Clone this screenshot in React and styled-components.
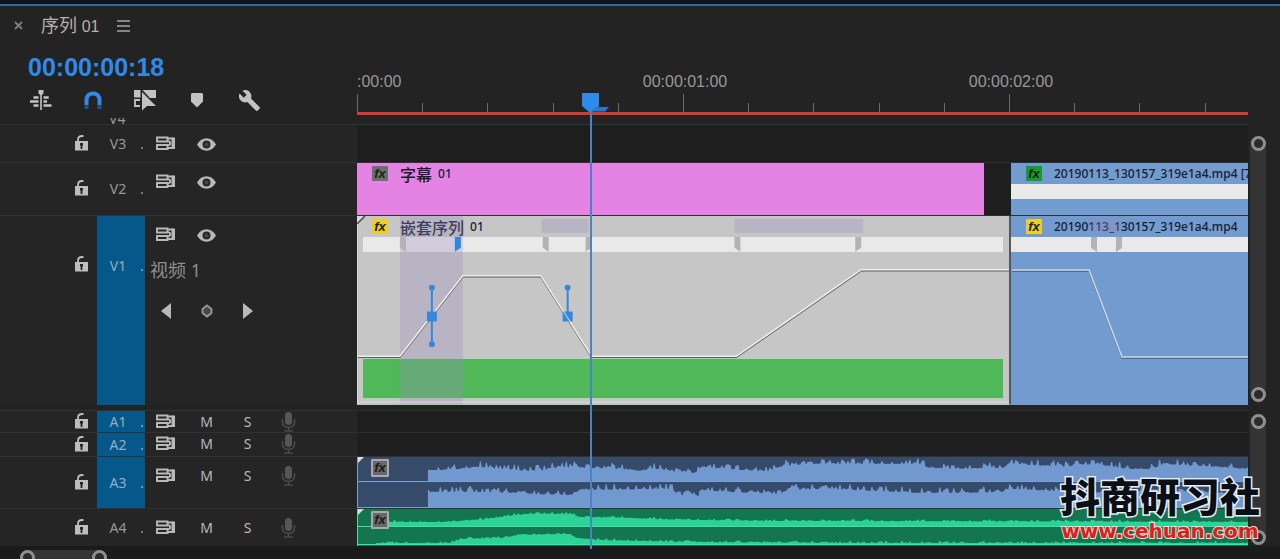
import React, { Fragment, useState } from 'react'
import styled, { createGlobalStyle } from 'styled-components'
import { MdBuild } from 'react-icons/md'

const GlobalStyle = createGlobalStyle`
  * {
    box-sizing: border-box;
  }
  body {
    margin: 0;
    background: #232323;
    color: #b4b4b4;
    font-family: "Noto Sans", "Noto Sans CJK SC", sans-serif;
    font-size: 14px;
  }
  button {
    display: flex;
    align-items: center;
    justify-content: center;
    padding: 0;
    background: none;
    border: 0;
    color: inherit;
    font: inherit;
    cursor: pointer;
  }
`

const Panel = styled.div`
  position: relative;
  min-height: 100vh;
  overflow: hidden;

  border-top: 4px solid #0c131c;
`

const TabBar = styled.header`
  display: flex;
  align-items: center;
  gap: 18px;
  height: 41px;
  padding-left: 14px;

  border-top: 2px solid #38659a;
`

const TabTitle = styled.h1`
  margin: 0;
  color: #b8b0ae;
  font-size: 18px;
  font-weight: 400;
  line-height: 24px;

  span {
    font-family: "Liberation Sans", sans-serif;
    font-size: 16px;
  }
`

const Timeline = styled.main`
  position: relative;
`

/* left tools / track names, lane, scroll gutter */
const Top = styled.div`
  display: grid;
  grid-template-columns: 357px 1fr 32px;
  height: 73px;
`

const Timecode = styled.div`
  padding: 7px 0 0 28px;

  color: #2f8ae8; /* blue */
  font-family: "Liberation Sans", sans-serif;
  font-size: 25px;
  font-weight: 600;
  line-height: 30px;
`

const Tools = styled.div`
  display: grid;
  grid-template-columns: repeat(5, 52px);
  height: 36px;
  padding-left: 15px;

  color: #c2c2c2;
`

const Ruler = styled.div`
  padding-top: 27px;
  overflow: hidden;
`

const RulerLabels = styled.div`
  display: grid;
  grid-template-columns: 165fr 326fr 326fr 74fr;

  color: #989898;
  font-family: "Liberation Sans", sans-serif;
  font-size: 16px;
  line-height: 20px;
  text-align: center;

  span:first-child {
    text-align: left;
  }
`

const Ticks = styled.svg`
  display: block;
  width: 100%;
  height: 20px;
`

const RenderBar = styled.div`
  height: 3px;
  background: #d63a34; /* red */
`

const Group = styled.section`
  display: grid;
  grid-template-columns: 1fr 32px;
  ${({ $gap }) => $gap && 'margin-top: 5px;'}
`

/* bottom edge of the track scrolled out of view */
const SliverTrack = styled.div`
  display: flex;
  align-items: flex-end;
  height: 6px;
  padding-left: 109px;
  overflow: hidden;

  color: #989898;
  line-height: 11px;
`

const Track = styled.div`
  display: grid;
  grid-template-columns: 357px 1fr;
  height: ${({ $height }) => $height}px;
`

const TrackHead = styled.div`
  display: grid;
  grid-template-columns: 97px 48px 1fr;

  background: #252525;
  border-top: 1px solid #303030;
`

const LockCell = styled.div`
  display: flex;
  align-items: ${({ $tall }) => $tall ? 'flex-start' : 'center'};
  justify-content: flex-end;
  padding: ${({ $tall }) => $tall ? '40px 9px 0 0' : '0 9px 0 0'};

  color: #bdbdbd;
`

const NameCell = styled.div`
  display: grid;
  grid-template-columns: 1fr 6px;
  align-items: ${({ $tall }) => $tall ? 'start' : 'center'};
  padding-top: ${({ $tall }) => $tall ? 40 : 0}px;

  background: ${({ $on }) => $on ? '#07588a' : 'transparent'};
  color: ${({ $on }) => $on ? '#8fb0c8' : '#989898'};
  line-height: 20px;
  text-align: center;
`

const Controls = styled.div`
  display: grid;
  grid-template-columns: repeat(4, 41px);
  align-content: start;
  align-items: center;
  justify-items: center;
  padding-top: ${({ $compact }) => $compact ? 2 : 10}px;

  color: #b9b9b9;
  line-height: 18px;

  button {
    height: 18px;
  }
`

const TrackName = styled.div`
  grid-column: 1 / -1;
  justify-self: start;
  padding: 14px 0 20px 5px;

  color: #8e8e8e;
  font-size: 18px;
  line-height: 24px;
`

const Lane = styled.div`
  display: grid;
  grid-template-columns: ${({ $cols }) => $cols || '1fr'};
  min-width: 0;

  background: #1e1e1e;
  border-top: 1px solid ${({ $first }) => $first ? '#263c3b' : '#303030'};
`

const clipColors = {
  pink: '#e583e5',
  grey: '#c6c6c6',
  blue: '#729bcf'
}

const Clip = styled.div`
  position: relative;
  min-width: 0;
  overflow: hidden;

  background: ${({ $color }) => clipColors[$color]};
  ${({ $color }) => $color === 'grey' && `
    border-right: 2px solid #56595c;
    border-bottom: 1px solid #9fd3a4;
  `}
`

const ClipTitle = styled.div`
  display: flex;
  align-items: center;
  gap: 12px;
  height: 21px;
  padding-left: 15px;

  color: #15202e;
  font-size: 12px;
  font-weight: 500;
  line-height: 20px;
  white-space: nowrap;
`

const ClipName = styled.span`
  display: flex;
  align-items: center;
  gap: 6px;
`

const Big = styled.span`
  font-family: "Noto Sans CJK SC", sans-serif;
  font-size: 16px;
  line-height: 18px;
`

const badgeColors = {
  dim: '#67706a',
  green: '#169a35',
  yellow: '#f0cd22'
}

const Badge = styled.span`
  flex: none;
  width: 16px;
  height: 15px;

  background: ${({ $color }) => badgeColors[$color]};
  border-radius: 1px;
  color: #16240f;
  font-family: "Liberation Sans", sans-serif;
  font-size: 13px;
  font-style: italic;
  font-weight: 700;
  line-height: 15px;
  text-align: center;
`

const AudioBadge = styled(Badge)`
  position: absolute;
  top: 2px;
  left: 13px;
  width: 18px;
  height: 18px;

  background: #686868;
  border: 2px solid #a9a9a9;
  color: #1b1b1b;
  line-height: 14px;
`

const SpeedBar = styled.div`
  height: 15px;
  margin: 0 ${({ $inset }) => $inset ? 6 : 0}px;
  background: #e9e9e9;
`

const Strip = styled.div`
  height: 39px;
  margin: 107px 6px 0;
  background: #50b858; /* green */
`

const Overlay = styled.svg`
  position: absolute;
  inset: 0;
  width: 100%;
  height: 100%;
`

const AudioClip = styled.div`
  position: relative;
  overflow: hidden;
  border-left: 1px solid ${({ $line }) => $line};
`

const Gutter = styled.div`
  display: flex;
  padding: ${({ $video }) => $video ? '18px 0 3px 2px' : '4px 0 1px 2px'};
`

const ScrollBar = styled.div`
  display: flex;
  flex-direction: ${({ $across }) => $across ? 'row' : 'column'};
  align-items: center;
  justify-content: space-between;
  width: ${({ $across }) => $across ? 87 : 16}px;

  background: #343434;
  border-radius: 8px;
`

const Ring = styled.span`
  width: 15px;
  height: 15px;

  background: #2b2b2b;
  border: 3px solid #8f8f8f;
  border-radius: 50%;
`

const Footer = styled.footer`
  height: 13px;
  padding: 4px 0 0 20px;
  overflow: hidden;

  background: #1b1b1b;
`

/* lies over the lane column only */
const PlayheadLayer = styled.div`
  position: absolute;
  top: 48px;
  right: 32px;
  bottom: 10px;
  left: 357px;

  pointer-events: none;
`

const Playhead = styled.div`
  position: absolute;
  top: 0;
  bottom: 0;
  width: 2px;

  background: #4a83c4;

  svg {
    position: absolute;
    top: 0;
    left: -8px;
  }
`

const Watermark = styled.a`
  position: absolute;
  right: 20px;
  bottom: 17px;

  color: #0b0f18;
  font-family: "Noto Sans CJK SC", sans-serif;
  font-size: 40px;
  font-weight: 900;
  line-height: 50px;
  paint-order: stroke fill;
  text-align: center;
  text-decoration: none;
  -webkit-text-stroke: 3px #e9eef2;

  span {
    display: block;
    color: #d8201c; /* red */
    font-family: "DejaVu Sans", sans-serif;
    font-size: 20px;
    font-weight: 700;
    line-height: 22px;
    -webkit-text-stroke: 2px #f4dcd8;
  }
`

const LockIcon = () => (
  <svg width="13" height="18" viewBox="0 0 13 18">
    <path d="M3 7.500V4.400C3.200 2.200 4.800 1 7 1h1.500" fill="none" stroke="currentColor" strokeWidth="1.800" />
    <path d="M0 6h13v9.500H0z" fill="currentColor" />
    <path d="M5 8h3v2.600H7.400V14H5.600v-3.400H5z" fill="#252525" />
  </svg>
)

const SyncIcon = () => (
  <svg width="19" height="18" viewBox="0 0 19 18">
    <path d="M1 2.500h10.500v4H1zM1 10h10.500v4H1z" fill="none" stroke="currentColor" strokeWidth="1.900" />
    <path d="M12 3.500h5M12 13h5M11 5.500l3 1.500v2.500l-3 1.500" fill="none" stroke="currentColor" strokeWidth="1.900" />
    <path d="M15.500 2.500H19V14h-3.500z" fill="currentColor" />
  </svg>
)

const EyeIcon = () => (
  <svg width="19" height="13" viewBox="0 0 19 13">
    <path d="M0 6.500C2.500 2.300 5.700.3 9.500.3s7 2 9.500 6.200c-2.500 4.200-5.700 6.200-9.500 6.200S2.500 10.700 0 6.500z" fill="currentColor" />
    <circle cx="9.500" cy="6.500" r="4" fill="#2a2a2a" />
    <circle cx="9.500" cy="6.500" r="1.800" fill="#484848" />
  </svg>
)

const MicIcon = () => (
  <svg width="15" height="20" viewBox="0 0 15 20">
    <rect x="4" y="0" width="7" height="13" rx="3.500" fill="#565656" />
    <path d="M1.500 7v3c0 3.400 2.600 5.300 6 5.300s6-1.900 6-5.300V7M7.500 15v4M3 19h9" fill="none" stroke="#4a4a4a" strokeWidth="1.600" />
  </svg>
)

const InsertIcon = () => (
  <svg width="22" height="20" viewBox="0 0 22 20">
    <path d="M8.500 0h5v3.500l-1.700 1.500V20h-1.600V5L8.500 3.500z" fill="currentColor" />
    <path d="M3.500 6.300h5v2.500h-5zM0 10.300h8.500v2.500H0zM3.500 14.300h5v2.500h-5zM13.500 6.300h5.200v2.500h-5.200zM13.500 10.300h3.500v2.500h-3.500zM13.500 14.300h8v2.500h-8z" fill="currentColor" />
  </svg>
)

const MagnetIcon = () => (
  <svg width="18" height="19" viewBox="0 0 18 19">
    <path d="M2.500 14V9C2.500 5 5.300 2.400 9 2.400S15.500 5 15.500 9v5" fill="none" stroke="#2f8ae8" strokeWidth="4" />
    <path d="M2.500 14.500V18M15.500 14.500V18" stroke="#20568a" strokeWidth="4" />
  </svg>
)

const LinkIcon = () => (
  <svg width="23" height="22" viewBox="0 0 23 22">
    <path d="M0 1h6.500v7.500H0zM8.500 1H22v8h-6z" fill="currentColor" />
    <path d="M6 11H1v6h5" fill="none" stroke="currentColor" strokeWidth="1.800" />
    <path d="M8 3v18.500l5-4.500h9z" fill="currentColor" />
  </svg>
)

const MarkerIcon = () => (
  <svg width="12" height="14" viewBox="0 0 12 14">
    <path d="M1 0h10l1 1v7.500L6.500 14h-1L0 8.500V1z" fill="currentColor" />
  </svg>
)

const CloseIcon = () => (
  <svg width="9" height="9" viewBox="0 0 9 9">
    <path d="M1 1l7 7M8 1L1 8" stroke="#7d7d7d" strokeWidth="1.800" />
  </svg>
)

const MenuIcon = () => (
  <svg width="13" height="12" viewBox="0 0 13 12">
    <path d="M0 1h13M0 6h13M0 11h13" stroke="#a8a8a8" strokeWidth="1.500" />
  </svg>
)

const Arrow = ({ left }) => (
  <svg width="10" height="16" viewBox="0 0 10 16">
    <path d={left ? 'M10 0v16L0 8z' : 'M0 0v16l10-8z'} fill="currentColor" />
  </svg>
)

const DiamondIcon = () => (
  <svg width="12" height="14" viewBox="0 0 12 14">
    <path d="M6 1.500L10.500 5v4L6 12.500 1.500 9V5z" fill="#484848" stroke="#999" strokeWidth="1.800" />
  </svg>
)

// lane units: 891 wide, one second is 326
const LANE = 891

// small repeatable jitter for the peaks
const jitter = (n) => {
  const v = Math.sin(n * 12.9898) * 43758.5453
  return v - Math.floor(v)
}

const wavePath = (points, base, noise, seed) => {
  let d = `M${points[0][0]} ${base}`
  let k = 0
  for (let x = points[0][0]; x < LANE; x += 2) {
    while (k < points.length - 2 && points[k + 1][0] <= x) k++
    const [x1, y1] = points[k]
    const [x2, y2] = points[k + 1]
    const y = y1 + (y2 - y1) * (x - x1) / (x2 - x1)
    // mostly flat, with a few sharp peaks
    const peak = Math.pow(jitter(x + seed), 3) * noise
    const top = (y + 1 - peak).toFixed(1)
    d += `L${x} ${top}L${x + 1} ${top}`
  }
  return `${d}L${LANE} ${base}Z`
}

const waves = {
  A3: {
    back: '#364b69', fill: '#7199cf', line: '#7b9fce', split: '#2f507a', noise: 6,
    channels: [
      { base: 25, points: [[70, 12], [90, 12], [120, 9], [170, 13], [188, 12], [200, 9], [260, 11], [280, 13], [300, 11], [325, 15], [338, 15], [343, 9], [380, 12], [410, 13], [425, 8], [450, 6], [560, 6], [572, 10], [600, 11], [645, 10], [655, 6], [710, 9], [720, 6], [750, 8], [770, 11], [795, 11], [806, 6], [891, 11]] },
      { base: 51, points: [[70, 34], [130, 34], [170, 36], [215, 37], [222, 32], [314, 31], [318, 35], [325, 38], [340, 38], [343, 32], [370, 34], [420, 36], [430, 32], [470, 31], [560, 35], [600, 35], [645, 34], [652, 31], [710, 34], [750, 35], [800, 32], [891, 36]] }
    ]
  },
  A4: {
    back: '#147650', fill: '#2cd399', line: '#4cdcac', split: '#067a4b', noise: 2,
    channels: [
      { base: 18, points: [[30, 12], [96, 12], [100, 11], [130, 9], [158, 5], [172, 4], [213, 4], [218, 7], [270, 8], [320, 10], [420, 11], [891, 12]] },
      { base: 36, points: [[18, 33], [92, 33], [105, 29], [145, 28], [160, 25], [212, 24], [217, 28], [240, 30], [320, 32], [480, 33], [891, 33]] }
    ]
  }
}

const Waveform = ({ id, height }) => {
  const { back, fill, line, split, noise, channels } = waves[id]
  return (
    <Overlay viewBox={`0 0 ${LANE} ${height}`} preserveAspectRatio="none" aria-hidden="true">
      <rect width={LANE} height={height} fill={back} />
      {channels.map( (ch, i) => (
        <Fragment key={ch.base}>
          <path d={wavePath(ch.points, ch.base, noise, i * 7)} fill={fill} />
          <path d={`M0 ${ch.base - .5}H${LANE}`} stroke={line} />
          <path d={`M0 ${ch.base + .5}H${LANE}`} stroke={split} />
        </Fragment>
      ))}
      <path d="M0 0H6L0 6Z" fill="#dcdcdc" />
    </Overlay>
  )
}

const KeyMark = ({ x, flip, color = '#b3b3b3' }) => (
  <path d={flip ? `M${x} 21h6v11l-6 4z` : `M${x} 21h6v15l-6-4z`} fill={color} />
)

const Band = ({ d, light }) => (
  <g fill="none" strokeWidth="1.500">
    <path d={d} stroke="#5b5b5b" transform="translate(0 1)" />
    <path d={d} stroke={light} />
  </g>
)

const NestArt = () => (
  <Overlay viewBox="0 0 653 189" preserveAspectRatio="none" aria-hidden="true">
    <g fill="#9b8cc0" fillOpacity=".3">
      <rect x="43" y="0" width="63" height="189" />
      <rect x="185" y="3" width="47" height="14" />
      <rect x="378" y="3" width="129" height="14" />
    </g>
    <path d="M0 0h8L0 8z" fill="#d8d8d8" />
    <path d="M0 8L8 0" stroke="#444" strokeWidth="1.500" />
    <path d="M.5 8V189M0 187h653" stroke="#dadada" fill="none" />
    <KeyMark x={43} />
    <KeyMark x={98} flip color="#2f86dd" />
    <KeyMark x={186} />
    <KeyMark x={229} flip />
    <KeyMark x={378} />
    <KeyMark x={499} flip />
    <Band d="M1 141H43L106 60H184L235 141H380L505 54H653" light="#efefef" />
    <g stroke="#3489dc" strokeWidth="2" fill="#3489dc">
      <path d="M75 72v57M211 72v28" />
      <path d="M71 97h8v8h-8zM207 97h8v8h-8z" />
    </g>
    <g fill="#3489dc">
      <circle cx="75" cy="72" r="3" />
      <circle cx="75" cy="129" r="3" />
      <circle cx="211" cy="72" r="3" />
    </g>
    <path d="M205 93L217 112" stroke="#e2e2e2" />
  </Overlay>
)

const VideoArt = () => (
  <Overlay viewBox="0 0 237 189" preserveAspectRatio="none" aria-hidden="true">
    <rect x="80" y="3" width="30" height="14" fill="#9b8cc0" fillOpacity=".3" />
    <KeyMark x={80} />
    <KeyMark x={105} flip />
    <Band d="M1 54H78L111 141H237" light="#c4dcf5" />
  </Overlay>
)

const videoTracks = [
  { id: 'V3', height: 38 },
  { id: 'V2', height: 53 },
  { id: 'V1', height: 190, on: true, tall: true, name: '视频 1' }
]

const audioTracks = [
  { id: 'A1', height: 22, on: true, compact: true },
  { id: 'A2', height: 24, on: true, compact: true },
  { id: 'A3', height: 52, on: true },
  { id: 'A4', height: 38 }
]

const TrackHeader = ({ track, children }) => (
  <TrackHead>
    <LockCell $tall={track.tall}>
      <button aria-label={`Lock ${track.id}`}><LockIcon /></button>
    </LockCell>
    <NameCell $on={track.on} $tall={track.tall}>
      <span>{track.id}</span>
      <span>.</span>
    </NameCell>
    <Controls $compact={track.compact}>
      <button aria-label="Sync lock"><SyncIcon /></button>
      {children}
    </Controls>
  </TrackHead>
)

const lanes = {
  V3: { cols: '1fr', clips: null },
  V2: {
    cols: '627fr 27fr 237fr',
    clips: (
      <Fragment>
        <Clip $color='pink'>
          <ClipTitle><Badge $color='dim'>fx</Badge><ClipName><Big>字幕</Big> 01</ClipName></ClipTitle>
        </Clip>
        <div />
        <Clip $color='blue'>
          <ClipTitle><Badge $color='green'>fx</Badge>20190113_130157_319e1a4.mp4 [7</ClipTitle>
          <SpeedBar />
        </Clip>
      </Fragment>
    )
  },
  V1: {
    cols: '654fr 237fr',
    clips: (
      <Fragment>
        <Clip $color='grey'>
          <ClipTitle><Badge $color='yellow'>fx</Badge><ClipName><Big>嵌套序列</Big> 01</ClipName></ClipTitle>
          <SpeedBar $inset />
          <Strip />
          <NestArt />
        </Clip>
        <Clip $color='blue'>
          <ClipTitle><Badge $color='yellow'>fx</Badge>20190113_130157_319e1a4.mp4</ClipTitle>
          <SpeedBar />
          <VideoArt />
        </Clip>
      </Fragment>
    )
  }
}

// major tick every fifth step
const ticks = Array.from({ length: 14 }, (_, i) => ({ x: Math.round(i * 65.2) + .5, major: i % 5 === 0 }))

const App = () => {
  const [ position ] = useState(233)

  const rings = <Fragment><Ring /><Ring /></Fragment>

  return (
    <Panel>
      <GlobalStyle />
      <TabBar>
        <button aria-label="Close"><CloseIcon /></button>
        <TabTitle>序列 <span>01</span></TabTitle>
        <button aria-label="Panel menu"><MenuIcon /></button>
      </TabBar>
      <Timeline>
        <Top>
          <div>
            <Timecode>00:00:00:18</Timecode>
            <Tools>
              <button aria-label="Insert as nest"><InsertIcon /></button>
              <button aria-label="Snap"><MagnetIcon /></button>
              <button aria-label="Linked selection"><LinkIcon /></button>
              <button aria-label="Add marker"><MarkerIcon /></button>
              <button aria-label="Settings"><MdBuild size={23} /></button>
            </Tools>
          </div>
          <Ruler>
            <RulerLabels>
              <span>:00:00</span>
              <span>00:00:01:00</span>
              <span>00:00:02:00</span>
            </RulerLabels>
            <Ticks viewBox={`0 0 ${LANE} 20`} preserveAspectRatio="none" aria-hidden="true">
              {ticks.map( t => <path key={t.x} d={`M${t.x} ${t.major ? 2 : 11}V20`} stroke="#6a6a6a" />)}
            </Ticks>
            <RenderBar />
          </Ruler>
        </Top>
        <Group>
          <div>
            <SliverTrack><span>V4</span></SliverTrack>
            {videoTracks.map( track => (
              <Track key={track.id} $height={track.height}>
                <TrackHeader track={track}>
                  <button aria-label="Toggle output"><EyeIcon /></button>
                  {track.name &&
                    <Fragment>
                      <TrackName>{track.name}</TrackName>
                      <button aria-label="Previous keyframe"><Arrow left /></button>
                      <button aria-label="Add keyframe"><DiamondIcon /></button>
                      <button aria-label="Next keyframe"><Arrow /></button>
                    </Fragment>
                  }
                </TrackHeader>
                <Lane $cols={lanes[track.id].cols} $first={track.id === 'V3'}>{lanes[track.id].clips}</Lane>
              </Track>
            ))}
          </div>
          <Gutter $video><ScrollBar>{rings}</ScrollBar></Gutter>
        </Group>
        <Group $gap>
          <div>
            {audioTracks.map( track => (
              <Track key={track.id} $height={track.height}>
                <TrackHeader track={track}>
                  <button aria-label="Mute">M</button>
                  <button aria-label="Solo">S</button>
                  <button aria-label="Voice-over record"><MicIcon /></button>
                </TrackHeader>
                <Lane>
                  {waves[track.id] &&
                    <AudioClip $line={waves[track.id].line}>
                      <Waveform id={track.id} height={track.height - 1} />
                      <AudioBadge $color='dim'>fx</AudioBadge>
                    </AudioClip>
                  }
                </Lane>
              </Track>
            ))}
          </div>
          <Gutter><ScrollBar>{rings}</ScrollBar></Gutter>
        </Group>
        <Footer><ScrollBar $across>{rings}</ScrollBar></Footer>
        <PlayheadLayer>
          <Playhead style={{ left: `${position / LANE * 100}%` }}>
            <svg width="28" height="19" viewBox="0 0 28 19" aria-hidden="true">
              <path d="M0 0h17v13l-7 6H7l-7-6z" fill="#2d8ceb" />
              <path d="M14 14h13l-4 4.500H9z" fill="#2a78cc" />
            </svg>
          </Playhead>
        </PlayheadLayer>
      </Timeline>
      <Watermark href="#">抖商研习社<span>www.cehuan.com</span></Watermark>
    </Panel>
  )
}

export default App
